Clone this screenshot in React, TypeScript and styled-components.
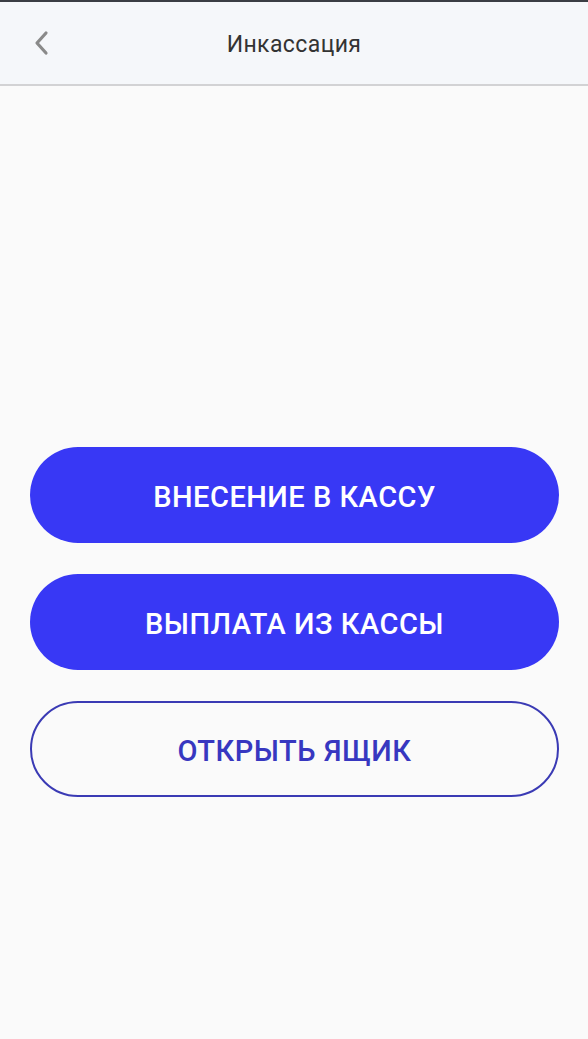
import React from "react";
import styled, { createGlobalStyle } from "styled-components";

const Global = createGlobalStyle`
  html, body { margin: 0; padding: 0; background: #fafafa; }
  body { font-family: Roboto, "Liberation Sans", sans-serif; }
`;

const Screen = styled.div`
  width: 588px;
  height: 1039px;
  display: flex;
  flex-direction: column;
  background: #fafafa;
  border-top: 2px solid #3a3d44;
  box-sizing: border-box;
`;

const Header = styled.header`
  height: 82px;
  flex: none;
  display: grid;
  grid-template-columns: 80px 1fr 80px;
  align-items: center;
  background: #f5f7fa;
  border-bottom: 2px solid #d2d2d4;
`;

const BackButton = styled.button`
  border: none;
  background: none;
  padding: 0 0 0 32px;
  display: flex;
  align-items: center;
  height: 100%;
  cursor: pointer;
`;

const Title = styled.h1`
  margin: 0;
  padding-top: 2px;
  text-align: center;
  font-size: 23px;
  font-weight: 400;
  color: #333;
  letter-spacing: 0.4px;
`;

const Body = styled.main`
  flex: 1;
  display: flex;
  flex-direction: column;
  gap: 31px;
  padding: 361px 29px 0 30px;
`;

const ActionButton = styled.button<{ $outline?: boolean }>`
  height: 96px;
  border-radius: 48px;
  box-sizing: border-box;
  padding: 3px 0 0;
  font-family: Roboto, "Liberation Sans", sans-serif;
  font-size: 29px;
  font-weight: 500;
  text-transform: uppercase;
  letter-spacing: 0.5px;
  cursor: pointer;
  background: ${(p) => (p.$outline ? "transparent" : "#3838f5")};
  color: ${(p) => (p.$outline ? "#3737c0" : "#ffffff")};
  border: ${(p) => (p.$outline ? "2px solid #3a3ab4" : "none")};
`;

export default function App() {
  return (
    <>
      <Global />
      <Screen>
        <Header>
          <BackButton aria-label="Назад">
            <svg width="18" height="26" viewBox="0 0 18 26">
              <path d="M14 3 L5 13 L14 23" fill="none" stroke="#8a8a8a" strokeWidth="3.2" strokeLinecap="round" strokeLinejoin="round" />
            </svg>
          </BackButton>
          <Title>Инкассация</Title>
          <div />
        </Header>
        <Body>
          <ActionButton>Внесение в кассу</ActionButton>
          <ActionButton>Выплата из кассы</ActionButton>
          <ActionButton $outline>Открыть ящик</ActionButton>
        </Body>
      </Screen>
    </>
  );
}
